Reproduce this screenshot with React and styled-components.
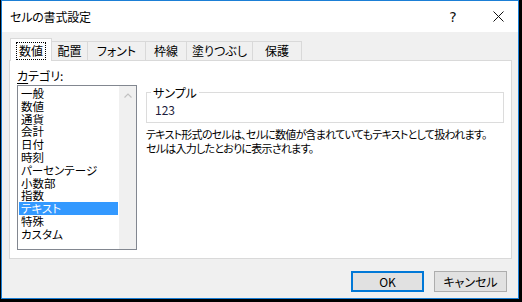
import React from 'react'
import styled, { createGlobalStyle } from 'styled-components';

const GlobalStyle = createGlobalStyle`
  html, body {
    margin: 0;
    padding: 0;
    background: #000;
  }
  * {
    box-sizing: border-box;
  }
`;

const font = `"Noto Sans CJK JP", "Noto Sans", sans-serif`;

const categories = [
  '一般', '数値', '通貨', '会計', '日付', '時刻', 'パーセンテージ',
  '小数部', '指数', 'テキスト', '特殊', 'カスタム',
];

const tabs = [
  { id: 1, label: '数値', width: 42 },
  { id: 2, label: '配置', width: 37 },
  { id: 3, label: 'フォント', width: 59 },
  { id: 4, label: '枠線', width: 42 },
  { id: 5, label: '塗りつぶし', width: 67 },
  { id: 6, label: '保護', width: 50 },
];

const Frame = styled.div`
  width : 522px;
  height : 302px;
  padding : 0 3px 3px 1px;
  background : #000;
  font-family : ${font};
  font-feature-settings: "palt";
  font-size : 12px;
  color : #000;
`;

const Window = styled.div`
  height : 100%;
  border : 1px solid #1b7fd6;
  background : #f0f0f0;
  display : flex;
  flex-direction: column;
`;

const TitleBar = styled.div`
  height : 31px;
  background : #fff;
  display : flex;
  align-items : center;
`;

const Title = styled.div`
  flex : 1;
  padding-left : 8px;
  font-size : 12px;
  letter-spacing : -0.2px;
  line-height : 16px;
  margin-top : 1px;
`;

const CaptionButton = styled.div`
  width : ${p => p.$w}px;
  height : 100%;
  display : flex;
  align-items : center;
  justify-content : center;
  font-family : "DejaVu Sans", sans-serif;
  font-size : 14px;
  color : #111;
`;

const Body = styled.div`
  flex : 1;
  display : flex;
  flex-direction: column;
  padding : 6px 6px 0 7px;
`;

const TabStrip = styled.div`
  height : 22px;
  display : flex;
  align-items : flex-end;
  padding-left : 1px;
  position : relative;
  z-index : 1;
`;

const Tab = styled.div`
  width : ${p => p.$w}px;
  height : ${p => p.$active ? 23 : 19}px;
  margin-left : ${p => p.$first ? 0 : -1}px;
  margin-bottom : ${p => p.$active ? -1 : 0}px;
  border : 1px solid #d9d9d9;
  border-bottom : none;
  background : ${p => p.$active ? '#fff' : '#f0f0f0'};
  display : flex;
  align-items : center;
  justify-content : center;
  padding-top : ${p => p.$active ? 1 : 0}px;
  line-height : 14px;
  position : relative;
  z-index : ${p => p.$active ? 2 : 1};
`;

const FocusLabel = styled.span`
  outline : 1px dotted #000;
  outline-offset : 1px;
  padding : 0 1px;
`;

const Panel = styled.div`
  height : 199px;
  background : #fff;
  border : 1px solid #d9d9d9;
  padding : 7px 7px 0 7px;
  display : grid;
  grid-template-columns: 120px 1fr;
  column-gap : 9px;
`;

const Column = styled.div`
  display : flex;
  flex-direction: column;
  min-width : 0;
`;

const Label = styled.div`
  line-height : 16px;
  height : 16px;
`;

const Access = styled.span`
  text-decoration : underline;
  text-underline-offset : 2px;
`;

const ListBox = styled.div`
  margin-top : 1px;
  height : 165px;
  border : 1px solid #828790;
  display : flex;
`;

const Items = styled.div`
  flex : 1;
  padding : 1px 1px 0 1px;
`;

const Item = styled.div`
  height : 12.8px;
  line-height : 12.8px;
  font-size : 11.5px;
  padding-left : 2px;
  white-space : nowrap;
  background : ${p => p.$selected ? '#3399ff' : 'transparent'};
  color : ${p => p.$selected ? '#fff' : '#000'};
`;

const ScrollBar = styled.div`
  width : 17px;
  background : #f0f0f0;
  display : flex;
  justify-content : center;
  padding-top : 7px;
`;

const GroupBox = styled.fieldset`
  margin : 17px 0 0 0;
  padding : 2px 8px 4px 8px;
  border : 1px solid #dcdcdc;
  min-width : 0;
`;

const Legend = styled.legend`
  padding : 0 2px;
  margin-left : -4px;
  line-height : 15px;
  color : #000;
`;

const SampleValue = styled.div`
  line-height : 16px;
  color : #1c1c3c;
`;

const Description = styled.p`
  margin : 4px 0 0 0;
  line-height : 14px;
  font-size : 11px;
  letter-spacing : -0.75px;
  white-space : nowrap;
`;

const Footer = styled.div`
  display : flex;
  justify-content : flex-end;
  gap : 10px;
  padding : 12px 5px 0 0;
`;

const Button = styled.div`
  width : 73px;
  height : 21px;
  background : #e1e1e1;
  border : 1px solid ${p => p.$default ? '#0078d7' : '#adadad'};
  box-shadow : ${p => p.$default ? 'inset 0 0 0 1px #0078d7' : 'none'};
  display : flex;
  align-items : center;
  justify-content : center;
  line-height : 14px;
`;

const CloseIcon = () => (
  <svg width="11" height="11" viewBox="0 0 11 11">
    <path d="M0.5 0.5 L10.5 10.5 M10.5 0.5 L0.5 10.5" stroke="#111" strokeWidth="1" />
  </svg>
);

const UpArrow = () => (
  <svg width="8" height="5" viewBox="0 0 8 5">
    <path d="M0.5 4.5 L4 1 L7.5 4.5" stroke="#c2c2c2" strokeWidth="1.2" fill="none" />
  </svg>
);

export default function App() {
  return (
    <>
      <GlobalStyle />
      <Frame>
        <Window>
          <TitleBar>
            <Title>セルの書式設定</Title>
            <CaptionButton $w={50}>?</CaptionButton>
            <CaptionButton $w={40}><CloseIcon /></CaptionButton>
          </TitleBar>
          <Body>
            <TabStrip>
              {tabs.map((tab, i) =>
                <Tab key={tab.id} $w={tab.width} $active={i === 0} $first={i === 0}>
                  {i === 0 ? <FocusLabel>{tab.label}</FocusLabel> : tab.label}
                </Tab>
              )}
            </TabStrip>
            <Panel>
              <Column>
                <Label><Access>カ</Access>テゴリ:</Label>
                <ListBox>
                  <Items>
                    {categories.map((c) =>
                      <Item key={c} $selected={c === 'テキスト'}>{c}</Item>
                    )}
                  </Items>
                  <ScrollBar><UpArrow /></ScrollBar>
                </ListBox>
              </Column>
              <Column>
                <GroupBox>
                  <Legend>サンプル</Legend>
                  <SampleValue>123</SampleValue>
                </GroupBox>
                <Description>
                  テキスト形式のセルは、セルに数値が含まれていてもテキストとして扱われます。<br />
                  セルは入力したとおりに表示されます。
                </Description>
              </Column>
            </Panel>
            <Footer>
              <Button $default>OK</Button>
              <Button>キャンセル</Button>
            </Footer>
          </Body>
        </Window>
      </Frame>
    </>
  )
}
